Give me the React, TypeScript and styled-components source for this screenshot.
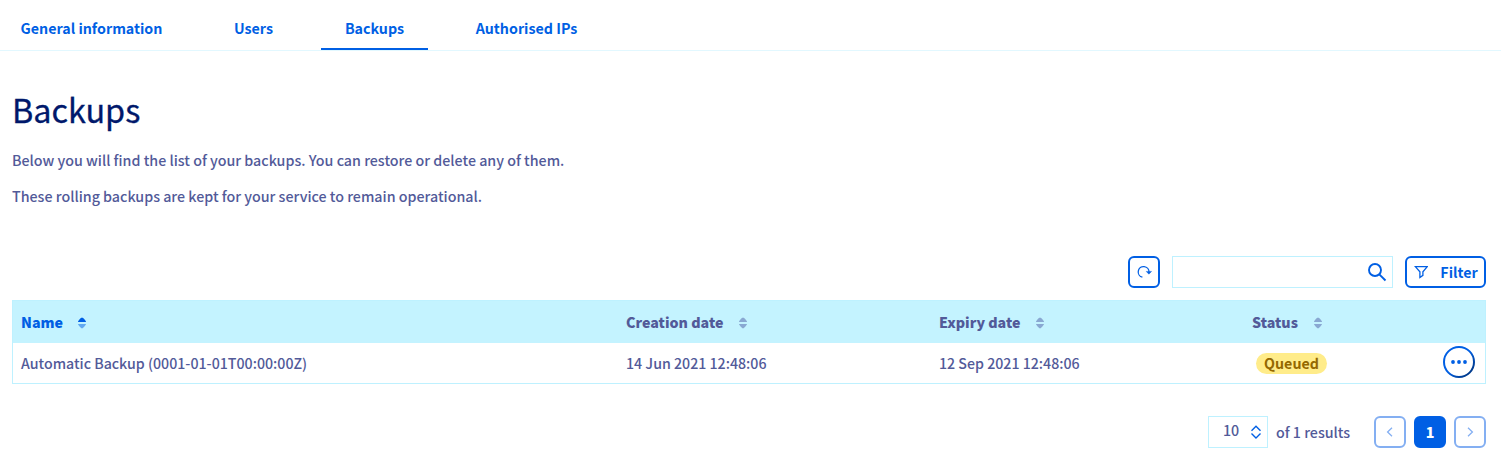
import React from "react";
import styled, { createGlobalStyle } from "styled-components";

const GlobalStyle = createGlobalStyle`
  * { box-sizing: border-box; }
  body {
    margin: 0;
    background: #fff;
    color: #525a99;
    font-family: "Source Sans Pro", "Noto Sans CJK SC", "Noto Sans", sans-serif;
    font-size: 14.26px;
    font-weight: 500;
    line-height: 24px;
  }
  button, input { font: inherit; color: inherit; }
`;

const Tabs = styled.nav`
  display: flex;
  height: 51px;
  padding-left: 21px;
  border-bottom: 1px solid #e2f8ff;
`;

const Tab = styled.a<{ $width: number; $gap: number; $active?: boolean }>`
  display: flex;
  justify-content: center;
  width: ${(p) => p.$width}px;
  height: 50px;
  margin-right: ${(p) => p.$gap}px;
  padding-top: 16px;
  border-bottom: 2px solid ${(p) => (p.$active ? "#005fe4" : "transparent")};
  color: #005fe4;
  font-size: 14.25px;
  font-weight: 700;
  white-space: nowrap;
`;

const Page = styled.main`
  padding: 34px 15px 0 12px;
`;

const Title = styled.h1`
  margin: 0;
  color: #00186b;
  font-size: 32.4px;
  font-weight: 400;
  line-height: 48px;
  -webkit-text-stroke: 0.3px #00186b;
`;

const Text = styled.p`
  margin: 15px 0 0;
  & + & { margin-top: 12px; }
`;

const Toolbar = styled.div`
  display: flex;
  justify-content: flex-end;
  gap: 12px;
  height: 32px;
  margin: 48px 0 12px;
`;

const OutlineButton = styled.button<{ $width: number }>`
  display: flex;
  align-items: center;
  justify-content: center;
  width: ${(p) => p.$width}px;
  height: 32px;
  padding: 0;
  border: 2px solid #005fe4;
  border-radius: 6px;
  background: #fff;
  color: #005fe4;
  font-weight: 700;
`;

const FilterLabel = styled.span`
  margin: 0 -1px 0 12px;
`;

const Search = styled.label`
  display: flex;
  align-items: center;
  width: 221px;
  height: 32px;
  padding: 0 5px 0 8px;
  border: 1px solid #bef1ff;
  color: #005fe4;
`;

const SearchInput = styled.input`
  flex: 1;
  min-width: 0;
  border: 0;
  outline: 0;
  background: transparent;
`;

const Table = styled.div`
  border: 1px solid #bef1ff;
`;

const Row = styled.div<{ $head?: boolean }>`
  display: grid;
  grid-template-columns: 605px 313px 313px 1fr 50px;
  align-items: center;
  height: ${(p) => (p.$head ? 42 : 40)}px;
  background: ${(p) => (p.$head ? "#c4f3ff" : "#fff")};
`;

const Cell = styled.div`
  padding-left: 8px;
  font-size: 14.2px;
  white-space: nowrap;
`;

const HeadCell = styled.div<{ $sorted?: boolean }>`
  display: flex;
  align-items: center;
  gap: ${(p) => (p.$sorted ? 14 : 15)}px;
  padding-left: 8px;
  color: ${(p) => (p.$sorted ? "#005fe4" : "#525a99")};
  font-size: 14.25px;
  font-weight: 900;
  white-space: nowrap;

  svg { margin-top: 2px; }
`;

const Badge = styled.span`
  display: block;
  width: 71px;
  height: 21px;
  margin-left: 4px;
  border-radius: 11px;
  background: #ffec8a;
  color: #946800;
  font-size: 14.25px;
  font-weight: 700;
  line-height: 20px;
  text-align: center;
`;

const ActionCell = styled.div`
  display: flex;
  justify-content: flex-end;
  padding: 0 10px 3px 0;
`;

const MenuButton = styled.button`
  display: flex;
  padding: 0;
  border: 0;
  background: none;
`;

const Footer = styled.footer`
  display: flex;
  justify-content: flex-end;
  align-items: center;
  gap: 8px;
  height: 32px;
  margin-top: 32px;
`;

const PageSize = styled.div`
  display: flex;
  align-items: center;
  justify-content: space-between;
  width: 60px;
  height: 32px;
  padding: 0 5px 0 14px;
  border: 1px solid #bef1ff;
`;

const SizeValue = styled.span`
  padding-bottom: 4px;
`;

const Results = styled.span`
  width: 74px;
  margin-right: 16px;
  white-space: nowrap;
`;

const PageButton = styled.button<{ $current?: boolean }>`
  display: flex;
  align-items: center;
  justify-content: center;
  width: 32px;
  height: 32px;
  padding: 0;
  border: 2px solid ${(p) => (p.$current ? "#005fe4" : "#84aff2")};
  border-radius: 6px;
  background: ${(p) => (p.$current ? "#005fe4" : "#fff")};
  color: ${(p) => (p.$current ? "#fff" : "#84aff2")};
  font-weight: 900;
`;

const SortIcon = ({ sorted }: { sorted?: boolean }) => (
  <svg width="10" height="12" viewBox="0 0 10 12" fill={sorted ? "#005fe4" : "#89a8d2"}>
    <path d="M1 4.9C1 4 4 .6 5 .6S9 4 9 4.9z" />
    <path d="M1 7.1C1 8 4 11.4 5 11.4S9 8 9 7.1z" opacity={sorted ? 0.5 : 1} />
  </svg>
);

const RefreshIcon = () => (
  <svg width="16" height="16" viewBox="0 0 16 16" fill="none" stroke="#005fe4" strokeWidth="1.3">
    <path d="M6.4 13.2A5.4 5.4 0 1 1 13 8.2" />
    <path d="M10.2 7.4l2.7 2.8 2.7-2.8z" fill="#005fe4" stroke="#005fe4" strokeWidth="0.4" />
  </svg>
);

const SearchIcon = () => (
  <svg width="20" height="20" viewBox="0 0 20 20" fill="none" stroke="#005fe4" strokeWidth="1.9">
    <circle cx="8" cy="8" r="6" />
    <path d="M12.3 12.3l6.2 6.2" />
  </svg>
);

const FunnelIcon = () => (
  <svg width="14" height="14" viewBox="0 0 14 14" fill="none" stroke="#005fe4" strokeWidth="1.3">
    <path d="M1.3 1.6h12L8.9 6.8v3.6l-3 2.1V6.8z" />
  </svg>
);

const MoreIcon = () => (
  <svg width="32" height="32" viewBox="0 0 32 32">
    <defs>
      <linearGradient id="ring" x1="0.25" y1="0.25" x2="0.85" y2="0.85">
        <stop offset="0.4" stopColor="#005fe4" />
        <stop offset="1" stopColor="#003b8e" />
      </linearGradient>
    </defs>
    <circle cx="16" cy="16" r="15" fill="#fff" stroke="url(#ring)" strokeWidth="2" />
    <g fill="#005fe4">
      <circle cx="10" cy="16" r="1.9" />
      <circle cx="16" cy="16" r="1.9" />
      <circle cx="22" cy="16" r="1.9" />
    </g>
  </svg>
);

const UpDownIcon = () => (
  <svg width="12" height="14" viewBox="0 0 12 14" fill="none" stroke="#005fe4" strokeWidth="1.4">
    <path d="M1.5 5.8L6 1.3l4.5 4.5M1.5 8.4L6 12.9l4.5-4.5" />
  </svg>
);

const Chevron = ({ right }: { right?: boolean }) => (
  <svg width="10" height="12" viewBox="0 0 10 12" fill="none" stroke="#84aff2" strokeWidth="1.3">
    <path d={right ? "M3 1.8L7.4 6 3 10.2" : "M7 1.8L2.6 6 7 10.2"} />
  </svg>
);

export default function App() {
  return (
    <>
      <GlobalStyle />
      <Tabs>
        <Tab $width={141} $gap={48}>General information</Tab>
        <Tab $width={87} $gap={24}>Users</Tab>
        <Tab $width={107} $gap={24} $active>Backups</Tab>
        <Tab $width={149} $gap={0}>Authorised IPs</Tab>
      </Tabs>
      <Page>
        <Title>Backups</Title>
        <Text>Below you will find the list of your backups. You can restore or delete any of them.</Text>
        <Text>These rolling backups are kept for your service to remain operational.</Text>
        <Toolbar>
          <OutlineButton $width={32} aria-label="Refresh"><RefreshIcon /></OutlineButton>
          <Search>
            <SearchInput aria-label="Search" />
            <SearchIcon />
          </Search>
          <OutlineButton $width={81}>
            <FunnelIcon />
            <FilterLabel>Filter</FilterLabel>
          </OutlineButton>
        </Toolbar>
        <Table>
          <Row $head>
            <HeadCell $sorted>Name<SortIcon sorted /></HeadCell>
            <HeadCell>Creation date<SortIcon /></HeadCell>
            <HeadCell>Expiry date<SortIcon /></HeadCell>
            <HeadCell>Status<SortIcon /></HeadCell>
          </Row>
          <Row>
            <Cell>Automatic Backup (0001-01-01T00:00:00Z)</Cell>
            <Cell>14 Jun 2021 12:48:06</Cell>
            <Cell>12 Sep 2021 12:48:06</Cell>
            <Cell><Badge>Queued</Badge></Cell>
            <ActionCell><MenuButton aria-label="Actions"><MoreIcon /></MenuButton></ActionCell>
          </Row>
        </Table>
        <Footer>
          <PageSize><SizeValue>10</SizeValue><UpDownIcon /></PageSize>
          <Results>of 1 results</Results>
          <PageButton aria-label="Previous"><Chevron /></PageButton>
          <PageButton $current>1</PageButton>
          <PageButton aria-label="Next"><Chevron right /></PageButton>
        </Footer>
      </Page>
    </>
  );
}
